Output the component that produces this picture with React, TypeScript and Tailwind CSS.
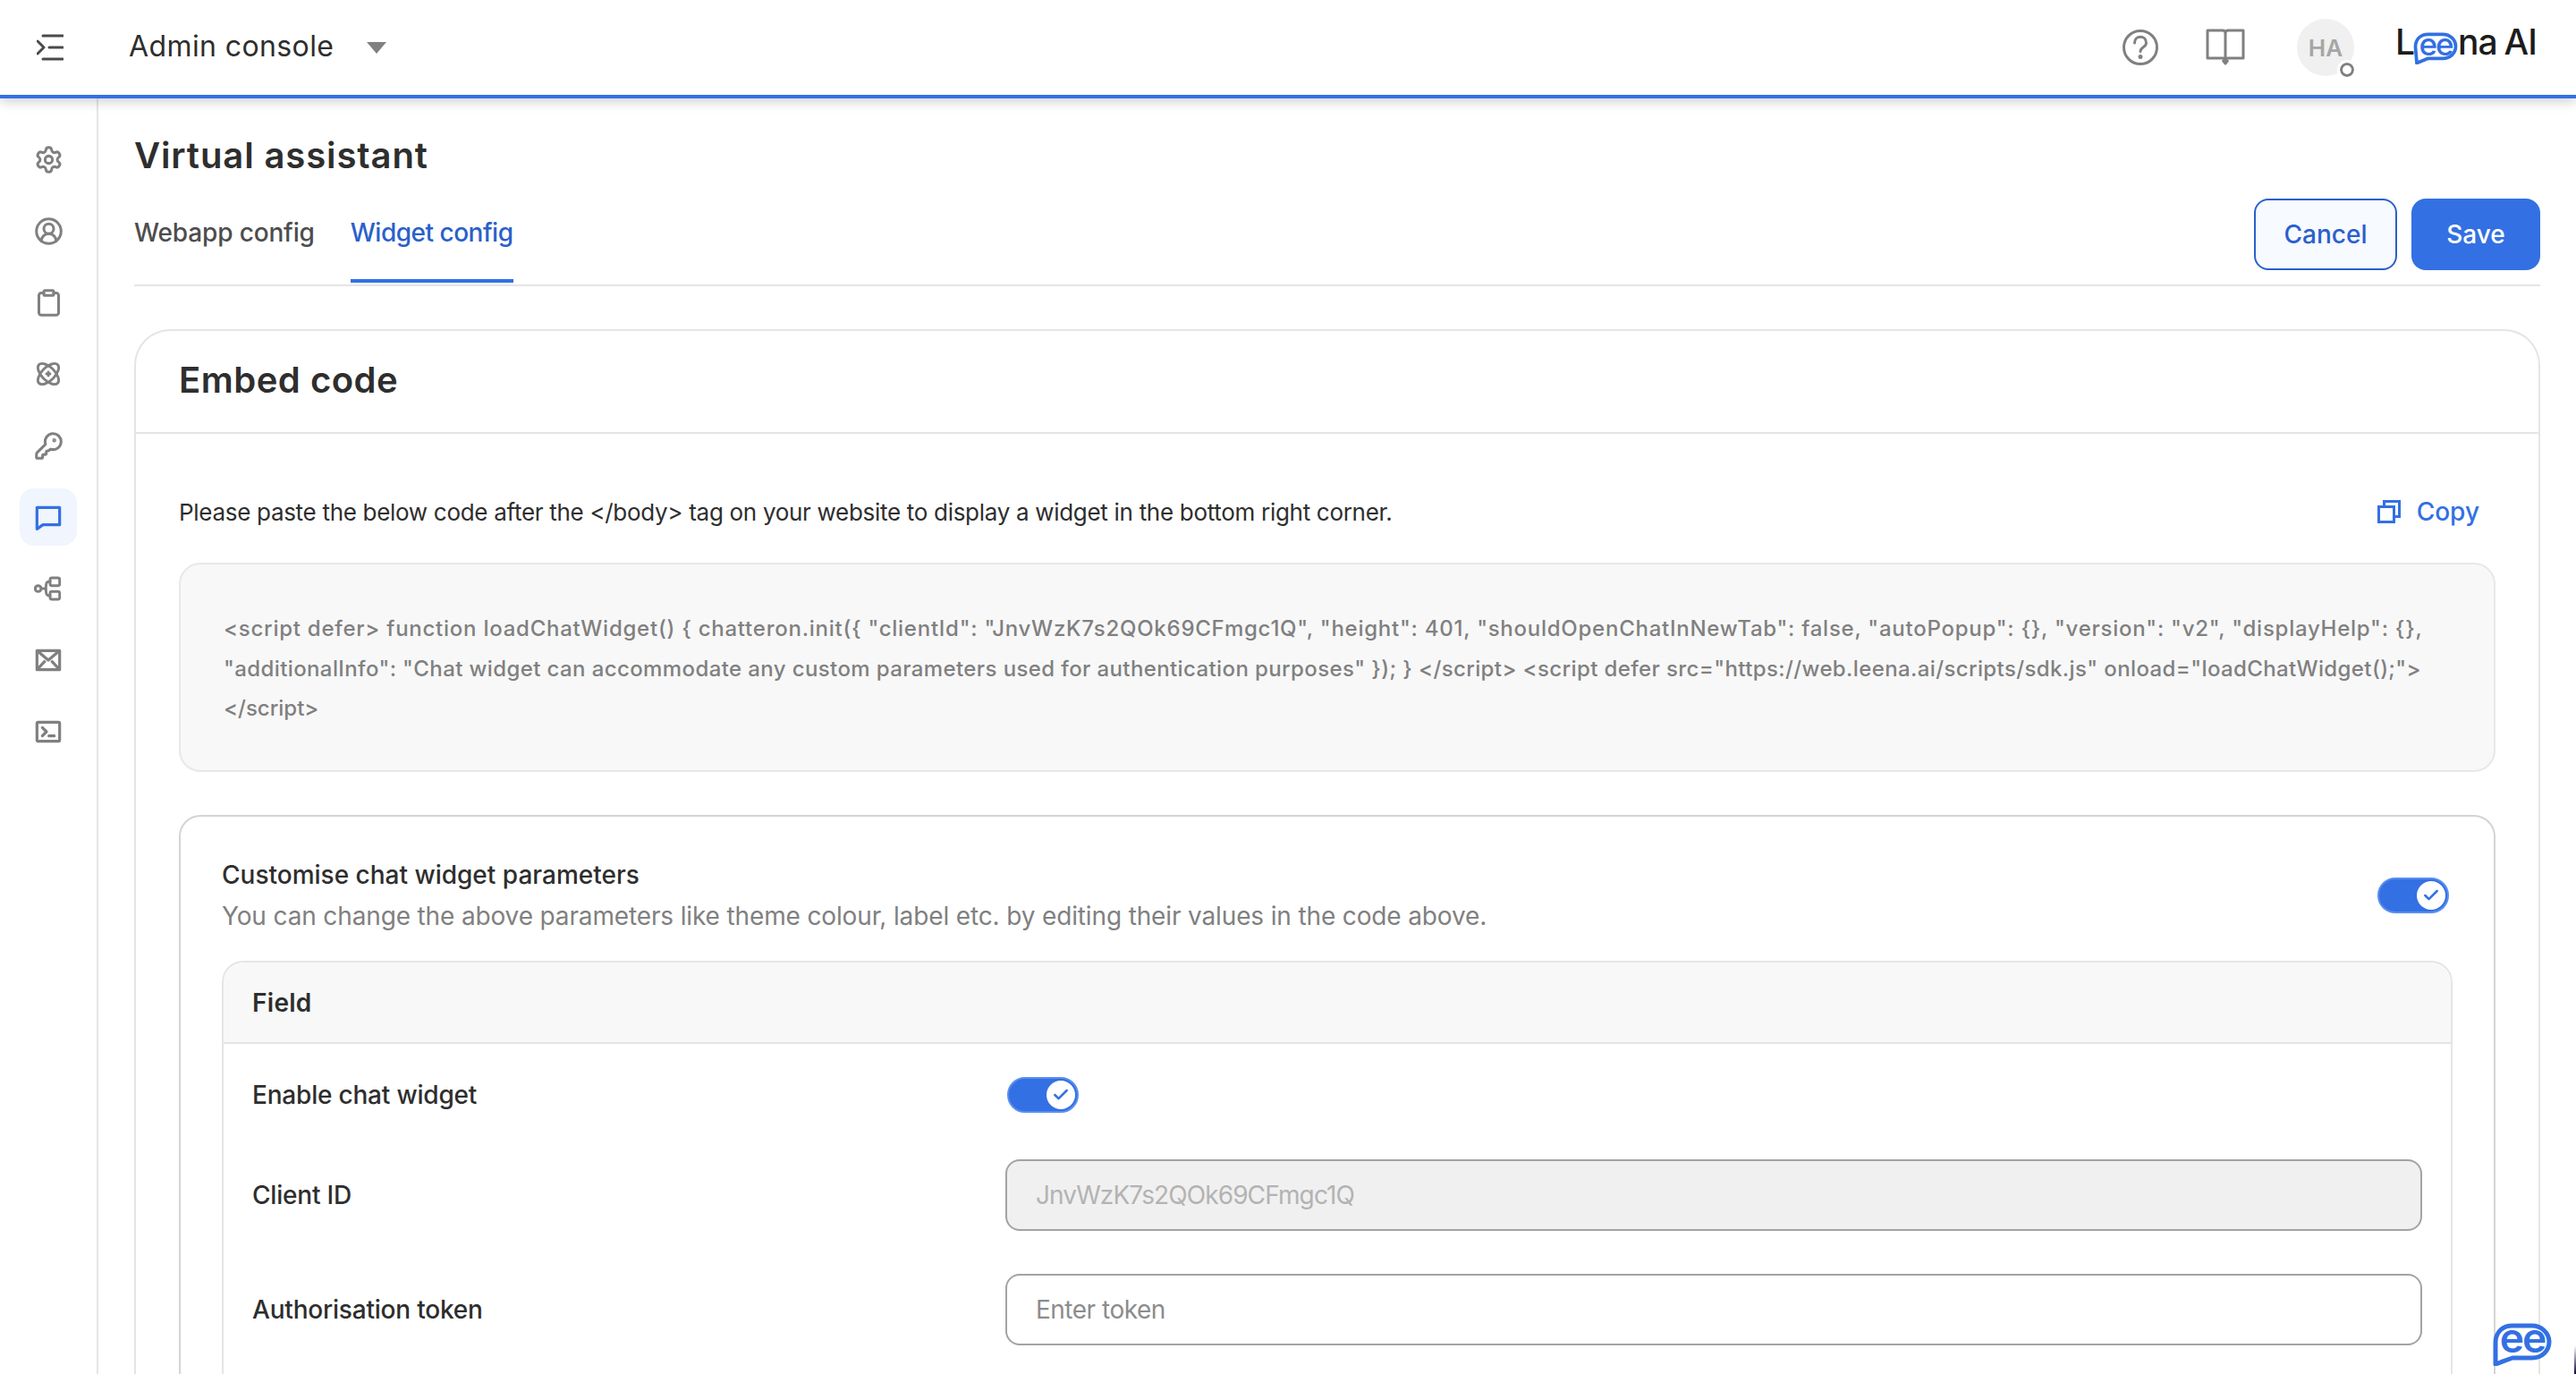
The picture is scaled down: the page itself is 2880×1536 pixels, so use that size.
import { Check, CircleUserRound, Clipboard, KeyRound, Settings } from "lucide-react";

const navIcons = [
  <Settings size={33} strokeWidth={2.2} />,
  <CircleUserRound size={33} strokeWidth={2.2} />,
  <Clipboard size={33} strokeWidth={2.2} />,
  // atom
  <svg width="32" height="32" viewBox="0 0 24 24" fill="none" stroke="currentColor" strokeWidth="2.200" strokeLinecap="round">
    <ellipse cx="12" cy="12" rx="11" ry="5.500" transform="rotate(45 12 12)" />
    <ellipse cx="12" cy="12" rx="11" ry="5.500" transform="rotate(-45 12 12)" />
    <path d="M12 10.500v3M10.500 12h3" />
  </svg>,
  <KeyRound size={33} strokeWidth={2.2} />,
  // chat
  <svg width="32" height="32" viewBox="0 0 24 24" fill="none" stroke="currentColor" strokeWidth="2.400" strokeLinecap="round" strokeLinejoin="round">
    <path d="M2.500 4h19v14.500H7.500l-5 3.500z" />
  </svg>,
  // flow
  <svg width="32" height="32" viewBox="0 0 24 24" fill="none" stroke="currentColor" strokeWidth="2.200" strokeLinecap="round">
    <circle cx="3.500" cy="12" r="2.500" />
    <rect x="13.500" y="3" width="8" height="6.500" rx="1.500" />
    <rect x="13.500" y="14.500" width="8" height="6.500" rx="1.500" />
    <path d="M6 12h4M10 12c0-4 0-6 3.500-6M10 12c0 4 0 6 3.500 6" />
  </svg>,
  // mail
  <svg width="32" height="32" viewBox="0 0 24 24" fill="none" stroke="currentColor" strokeWidth="2.400" strokeLinejoin="round">
    <rect x="2.500" y="4" width="19" height="16" />
    <path d="m2.500 4 9.500 8 9.500-8M2.500 20l7-7.500M21.500 20l-7-7.500" />
  </svg>,
  // terminal
  <svg width="32" height="32" viewBox="0 0 24 24" fill="none" stroke="currentColor" strokeWidth="2.400" strokeLinecap="round" strokeLinejoin="round">
    <rect x="2.500" y="4" width="19" height="16" rx="1" />
    <path d="m7 8.500 3.500 3.500L7 15.500M12.500 15.500h4.500" />
  </svg>,
];

function Toggle() {
  return (
    <div className="flex h-10 w-20 items-center justify-end rounded-full border-2 border-[#5a8df0] bg-[#3370e3] pr-[2px]">
      <div className="flex h-8 w-8 items-center justify-center rounded-full bg-white">
        <Check size={20} strokeWidth={3} className="text-[#3370e3]" />
      </div>
    </div>
  );
}

function LogoMark() {
  return (
    <div className="relative h-[36px] w-[50px] shrink-0">
      <svg width="50" height="36" viewBox="0 0 66 48" fill="none" className="absolute inset-0">
        <path d="M3 22C3 10 11 3 22 3h22c10 0 19 8 19 18s-8 18-19 18H22L5 46z" stroke="#3370e3" strokeWidth="5" strokeLinejoin="round" fill="#fff" />
      </svg>
      <span className="absolute left-0 top-0 flex h-[27px] w-full items-center justify-center text-[35px] font-medium leading-none tracking-[-2px] text-[#3370e3]">ee</span>
    </div>
  );
}

function Launcher() {
  return (
    <div className="relative h-[48px] w-[66px]">
      <svg width="66" height="48" viewBox="0 0 66 48" fill="none" className="absolute inset-0">
        <path d="M3 22C3 10 11 3 22 3h22c10 0 19 8 19 18s-8 18-19 18H22L3 46z" stroke="#3370e3" strokeWidth="5" strokeLinejoin="round" fill="#fff" />
      </svg>
      <span className="absolute left-0 top-0 flex h-[32px] w-full items-center justify-center text-[46px] font-semibold leading-none tracking-[-2px] text-[#3370e3]">ee</span>
    </div>
  );
}

export default function App() {
  return (
    <div className="relative flex h-screen flex-col overflow-hidden bg-white text-[#2e2e2e] [font-family:Inter,sans-serif]">
      {/* top bar */}
      <header className="relative z-10 flex h-[110px] shrink-0 items-center border-b-4 border-[#3370e3] bg-white pl-[41px] pr-[47px] shadow-[0_4px_12px_rgba(0,0,0,0.18)]">
        <svg width="30" height="30" viewBox="0 0 30 30" fill="none" stroke="#4a4a4a" strokeWidth="3" strokeLinecap="round" strokeLinejoin="round">
          <path d="M7 2h22M14 15h15M7 28h22M1 8l7 7-7 7" />
        </svg>
        <span className="ml-[73px] pb-[3px] text-[32px] leading-none tracking-[0.4px]">Admin console</span>
        <div className="ml-[37px] h-0 w-0 border-x-[11px] border-t-[13px] border-x-transparent border-t-[#808080]" />
        <div className="ml-auto flex items-center">
          <svg className="ml-[2px]" width="40" height="44" viewBox="0 0 40 44" fill="none" stroke="#808080" strokeWidth="3" strokeLinecap="round">
            <circle cx="20" cy="22" r="18.500" />
            <path d="M13.500 17c0-9 13-9 13 0 0 5-6.500 4.500-6.500 9.500" />
            <circle cx="20" cy="32.500" r="1" fill="#808080" />
          </svg>
          <svg className="ml-[53px]" width="44" height="42" viewBox="0 0 44 42" fill="none" stroke="#808080" strokeWidth="3" strokeLinejoin="round">
            <path d="M2 2h17c2 0 3 1 3 3v31c0-2-1-3-3-3H2zM42 2H25c-2 0-3 1-3 3v31c0-2 1-3 3-3h17z" />
            <path d="M19 35l3 4 3-4" />
          </svg>
          <div className="relative ml-[58px] flex h-16 w-16 items-center justify-center rounded-full bg-[#f0f0f0] text-[26px] font-semibold text-[#a6a6a6]">
            HA
            <div className="absolute bottom-[-1px] right-0 h-4 w-4 rounded-full border-[3px] border-[#808080] bg-white outline-[3px] outline-white" />
          </div>
          <div className="ml-[48px] flex w-[153px] shrink-0 -translate-y-[7px] items-center text-[39px] font-medium leading-none tracking-[-1px] text-[#1c1c1c]">
            <span className="-ml-[2px] w-[20px]">L</span>
            <div className="translate-y-2">
              <LogoMark />
            </div>
            <span>na</span>
            <span className="ml-[8px]">AI</span>
          </div>
        </div>
      </header>

      <div className="flex min-h-0 flex-1">
        {/* sidebar */}
        <nav className="flex w-[110px] shrink-0 flex-col items-center gap-4 border-r-2 border-[#e5e5e5] pt-9">
          {navIcons.map((icon, index) => (
            <div
              key={index}
              className={index === 5 ? "flex h-16 w-16 items-center justify-center rounded-2xl bg-[#f0f5fe] text-[#3370e3]" : "flex h-16 w-16 items-center justify-center text-[#808080]"}
            >
              {icon}
            </div>
          ))}
        </nav>

        {/* content */}
        <main className="min-w-0 flex-1 pl-10 pr-10">
          <h1 className="mt-[42px] text-[40px] font-semibold leading-[44px] tracking-[0.9px]">Virtual assistant</h1>
          <div className="flex h-[124px] items-end justify-between border-b-2 border-[#e5e5e5]">
            <div className="mb-[2px] flex h-[96px] gap-10 text-[28px] font-medium leading-[36px]">
              <div className="pt-[22px] tracking-[-0.15px] text-[#4d4d4d]">Webapp config</div>
              <div className="border-b-4 border-[#3370e3] pt-[22px] tracking-[-0.5px] text-[#2a60cc]">Widget config</div>
            </div>
            <div className="mb-4 flex gap-4 text-[28px] font-medium">
              <button className="h-20 w-40 rounded-2xl border-2 border-[#2a60cc] bg-[#f7faff] text-[#2a60cc]">Cancel</button>
              <button className="h-20 w-36 rounded-2xl bg-[#3370e3] text-white">Save</button>
            </div>
          </div>

          <section className="mt-12 rounded-t-[40px] border-2 border-b-0 border-[#e5e5e5] pb-40">
            <h2 className="flex h-[115px] items-center border-b-2 border-[#e5e5e5] px-12 pb-[3px] text-[40px] font-semibold tracking-[0.5px]">Embed code</h2>

            <div className="px-12">
              <div className="mt-[63px] flex h-12 items-center justify-between pr-[18px]">
                <p className="text-[26px] font-normal tracking-[-0.3px]">{"Please paste the below code after the </body> tag on your website to display a widget in the bottom right corner."}</p>
                <div className="flex items-center gap-[18px] text-[28px] font-medium text-[#3370e3]">
                  <svg width="26" height="26" viewBox="0 0 26 26" fill="none" stroke="#3370e3" strokeWidth="3">
                    <rect x="1.500" y="7.500" width="17" height="17" />
                    <path d="M7.500 7V1.500h17v17H19" />
                  </svg>
                  Copy
                </div>
              </div>

              <div className="mt-[33px] h-[234px] rounded-3xl border-2 border-[#e8e8e8] bg-[#f8f8f8] py-[50px] pl-12 text-[24px] font-medium leading-[44.500px] whitespace-nowrap text-[#808080]">
                <div className="tracking-[0.75px]">{'<script defer> function loadChatWidget() { chatteron.init({ "clientId": "JnvWzK7s2QOk69CFmgc1Q", "height": 401, "shouldOpenChatInNewTab": false, "autoPopup": {}, "version": "v2", "displayHelp": {},'}</div>
                <div className="tracking-[0.39px]">{'"additionalInfo": "Chat widget can accommodate any custom parameters used for authentication purposes" }); } </script> <script defer src="https://web.leena.ai/scripts/sdk.js" onload="loadChatWidget();">'}</div>
                <div>{"</script>"}</div>
              </div>

              <div className="mt-[48px] rounded-t-3xl border-2 border-b-0 border-[#d4d4d4] px-[46px] pb-10">
                <div className="flex h-[161px] items-start justify-between pr-1">
                  <div className="pt-[47px]">
                    <div className="text-[28px] font-medium leading-9">Customise chat widget parameters</div>
                    <div className="mt-[10px] text-[28px] leading-9 tracking-[-0.14px] text-[#808080]">You can change the above parameters like theme colour, label etc. by editing their values in the code above.</div>
                  </div>
                  <div className="mt-[68px]">
                    <Toggle />
                  </div>
                </div>

                <div className="rounded-t-3xl border-2 border-b-0 border-[#e5e5e5] pb-10">
                  <div className="flex h-[91px] items-center rounded-t-3xl border-b-2 border-[#e5e5e5] bg-[#f8f8f8] px-8 text-[28px] font-semibold tracking-[0.3px]">Field</div>
                  <div className="flex h-[112px] items-center px-8 pt-[2px]">
                    <div className="w-[842px] text-[28px] font-medium tracking-[-0.2px]">Enable chat widget</div>
                    <div className="ml-[2px]">
                      <Toggle />
                    </div>
                  </div>
                  <div className="mt-[17px] flex h-[128px] items-start px-8">
                    <div className="flex h-20 w-[842px] items-center text-[28px] font-medium tracking-[-0.2px]">Client ID</div>
                    <div className="flex h-20 flex-1 items-center rounded-2xl border-2 border-[#a3a3a3] bg-[#f0f0f0] px-8 text-[28px] tracking-[-0.9px] text-[#b3b3b3]">JnvWzK7s2QOk69CFmgc1Q</div>
                  </div>
                  <div className="flex h-[128px] items-start px-8">
                    <div className="flex h-20 w-[842px] items-center text-[28px] font-medium tracking-[-0.2px]">Authorisation token</div>
                    <div className="flex h-20 flex-1 items-center rounded-2xl border-2 border-[#a3a3a3] px-8 text-[28px] tracking-[-0.5px] text-[#8c8c8c]">Enter token</div>
                  </div>
                </div>
              </div>
            </div>
          </section>
        </main>
      </div>

      {/* chat launcher, floats over the page */}
      <div className="absolute bottom-[9px] right-[27px]">
        <Launcher />
      </div>
      <div className="absolute bottom-0 right-0 h-8 w-[2px] bg-gradient-to-b from-transparent to-[#0a0a3c]" />
    </div>
  );
}
